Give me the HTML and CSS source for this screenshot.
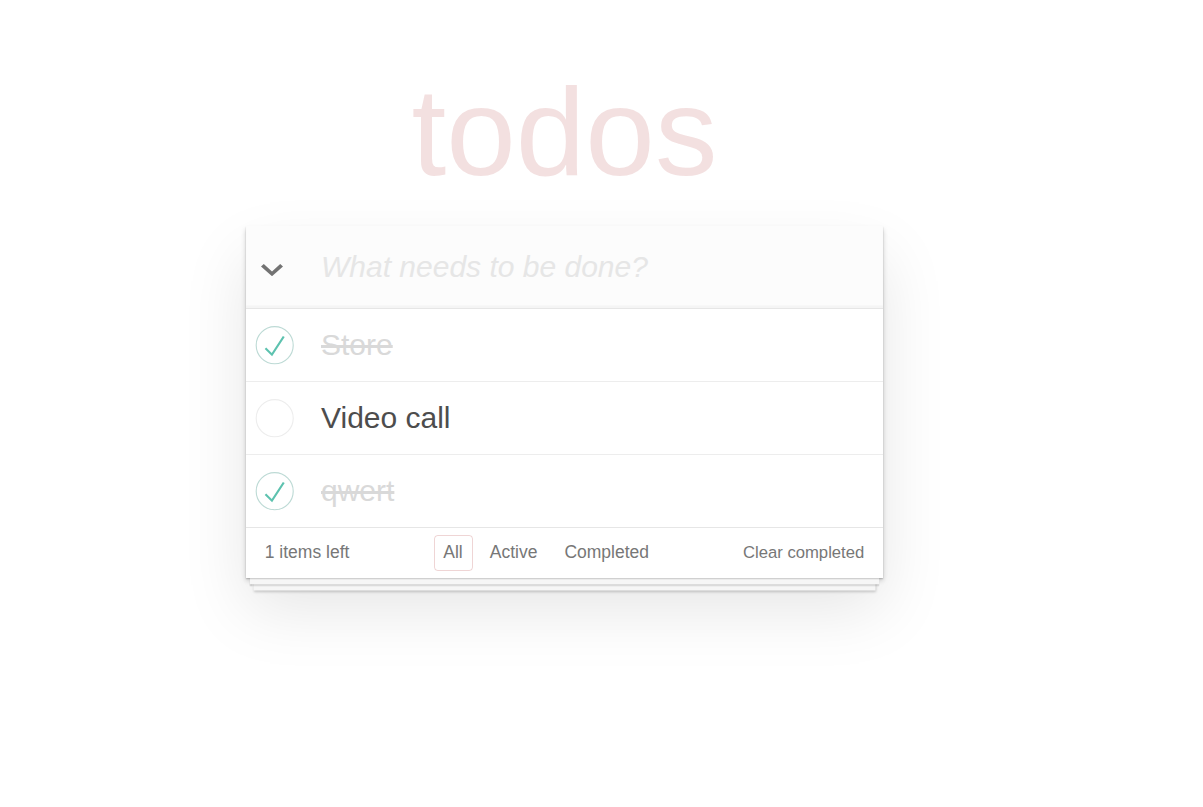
FILE: index.html
```html
<!DOCTYPE html>
<html lang="en">
<head>
<meta charset="utf-8">
<title>React • TodoMVC</title>
<link rel="stylesheet" href="styles.css">
</head>
<body>
<div class="page">
  <h1 class="title">todos</h1>
  <section class="todoapp">
    <header class="header">
      <label class="toggle-all" aria-label="Mark all as complete">
        <svg width="22" height="12" viewBox="0 0 22 12"><polygon points="0,2.6 2.8,0 11,7.4 19.2,0 22,2.6 11,12.2" fill="#737373"/></svg>
      </label>
      <input class="new-todo" placeholder="What needs to be done?">
    </header>
    <section class="main">
      <ul class="todo-list">
        <li class="todo completed">
          <span class="toggle"><svg width="50" height="50" viewBox="-10 -18 100 135"><circle cx="50" cy="50" r="50" fill="none" stroke="#bddad5" stroke-width="3"/><path fill="#5dc2af" d="M72 25L42 71 27 56l-4 4 20 20 34-52z"/></svg></span>
          <label class="todo-label">Store</label>
        </li>
        <li class="todo">
          <span class="toggle"><svg width="50" height="50" viewBox="-10 -18 100 135"><circle cx="50" cy="50" r="50" fill="none" stroke="#ededed" stroke-width="3"/></svg></span>
          <label class="todo-label">Video call</label>
        </li>
        <li class="todo completed">
          <span class="toggle"><svg width="50" height="50" viewBox="-10 -18 100 135"><circle cx="50" cy="50" r="50" fill="none" stroke="#bddad5" stroke-width="3"/><path fill="#5dc2af" d="M72 25L42 71 27 56l-4 4 20 20 34-52z"/></svg></span>
          <label class="todo-label">qwert</label>
        </li>
      </ul>
    </section>
    <footer class="footer">
      <span class="todo-count"><strong class="count-num">1</strong> items left</span>
      <ul class="filters"><li><a class="filter selected" href="#/">All</a></li><li><a class="filter" href="#/active">Active</a></li><li><a class="filter" href="#/completed">Completed</a></li></ul>
      <button class="clear-completed">Clear completed</button>
    </footer>
  </section>
</div>
</body>
</html>
```

FILE: styles.css
```css
html, body {
  margin: 0;
  padding: 0;
}

body {
  min-height: 807px;
  background: #fff;
  color: #4d4d4d;
  font-family: "Liberation Sans", Arial, Helvetica, sans-serif;
  font-size: 17.5px;
  line-height: 1.4;
}

.page {
  margin-left: 246px;
  width: 637px;
  padding-bottom: 200px;
}

.title {
  margin: 44px 0 7px 0;
  font-size: 125px;
  line-height: 175px;
  font-weight: normal;
  text-align: center;
  color: rgba(175, 47, 47, 0.15);
}

.todoapp {
  background: #fff;
  box-shadow:
    0 1.25px 1.25px rgba(0, 0, 0, 0.2),
    0 10px 0 -3.75px #f6f6f6,
    0 11.25px 1.25px -3.75px rgba(0, 0, 0, 0.2),
    0 20px 0 -7.5px #f6f6f6,
    0 21.25px 2.5px -7.5px rgba(0, 0, 0, 0.2),
    0 2.5px 5px 0 rgba(0, 0, 0, 0.2),
    0 31px 62px 0 rgba(0, 0, 0, 0.1);
}

.header {
  display: flex;
  align-items: center;
  height: 82px;
  background: #fcfcfc;
  box-shadow: inset 0 -2.5px 1.25px rgba(0, 0, 0, 0.03);
}

.toggle-all {
  display: flex;
  width: 75px;
  padding-left: 15px;
  box-sizing: border-box;
  margin-top: 6px;
}

.toggle-all svg {
  display: block;
}

.new-todo {
  flex: 1;
  min-width: 0;
  height: 42px;
  margin: 0;
  padding: 0 18.75px 0 0;
  border: none;
  outline: none;
  background: transparent;
  font-family: inherit;
  font-size: 30px;
  color: #4d4d4d;
}

.new-todo::placeholder {
  font-style: italic;
  color: #e6e6e6;
}

.main {
  border-top: 1px solid #e6e6e6;
}

.todo-list {
  margin: 0;
  padding: 0;
  list-style: none;
}

.todo {
  display: flex;
  align-items: center;
  font-size: 30px;
  border-bottom: 1px solid #ededed;
}

.todo:last-child {
  border-bottom: none;
}

.toggle {
  display: flex;
  align-items: center;
  width: 75px;
  flex: none;
}

.toggle svg {
  display: block;
}

.todo-label {
  flex: 1;
  padding: 18px 18.75px 18px 0;
  line-height: 36px;
  color: #4d4d4d;
}

.todo.completed .todo-label {
  color: #d9d9d9;
  text-decoration: line-through;
}

.footer {
  display: flex;
  align-items: center;
  height: 25px;
  padding: 12.5px 18.75px;
  border-top: 1px solid #e6e6e6;
  color: #777;
  line-height: 24.5px;
}

.todo-count {
  margin-top: -1px;
}

.count-num {
  font-weight: normal;
}

.filters {
  flex: 1;
  display: flex;
  justify-content: center;
  margin: 0;
  padding: 0;
  list-style: none;
}

.filter {
  display: block;
  margin: 0 3.75px;
  padding: 4px 8.75px 6px 8.75px;
  border: 1px solid transparent;
  border-radius: 3.75px;
  color: inherit;
  text-decoration: none;
  line-height: 24px;
}

.filter.selected {
  border-color: rgba(175, 47, 47, 0.2);
}

.clear-completed {
  margin: -1px 0 0 0;
  padding: 0;
  border: 0;
  background: none;
  font-family: inherit;
  font-size: 16.67px;
  line-height: 25px;
  color: inherit;
  cursor: pointer;
}
```
